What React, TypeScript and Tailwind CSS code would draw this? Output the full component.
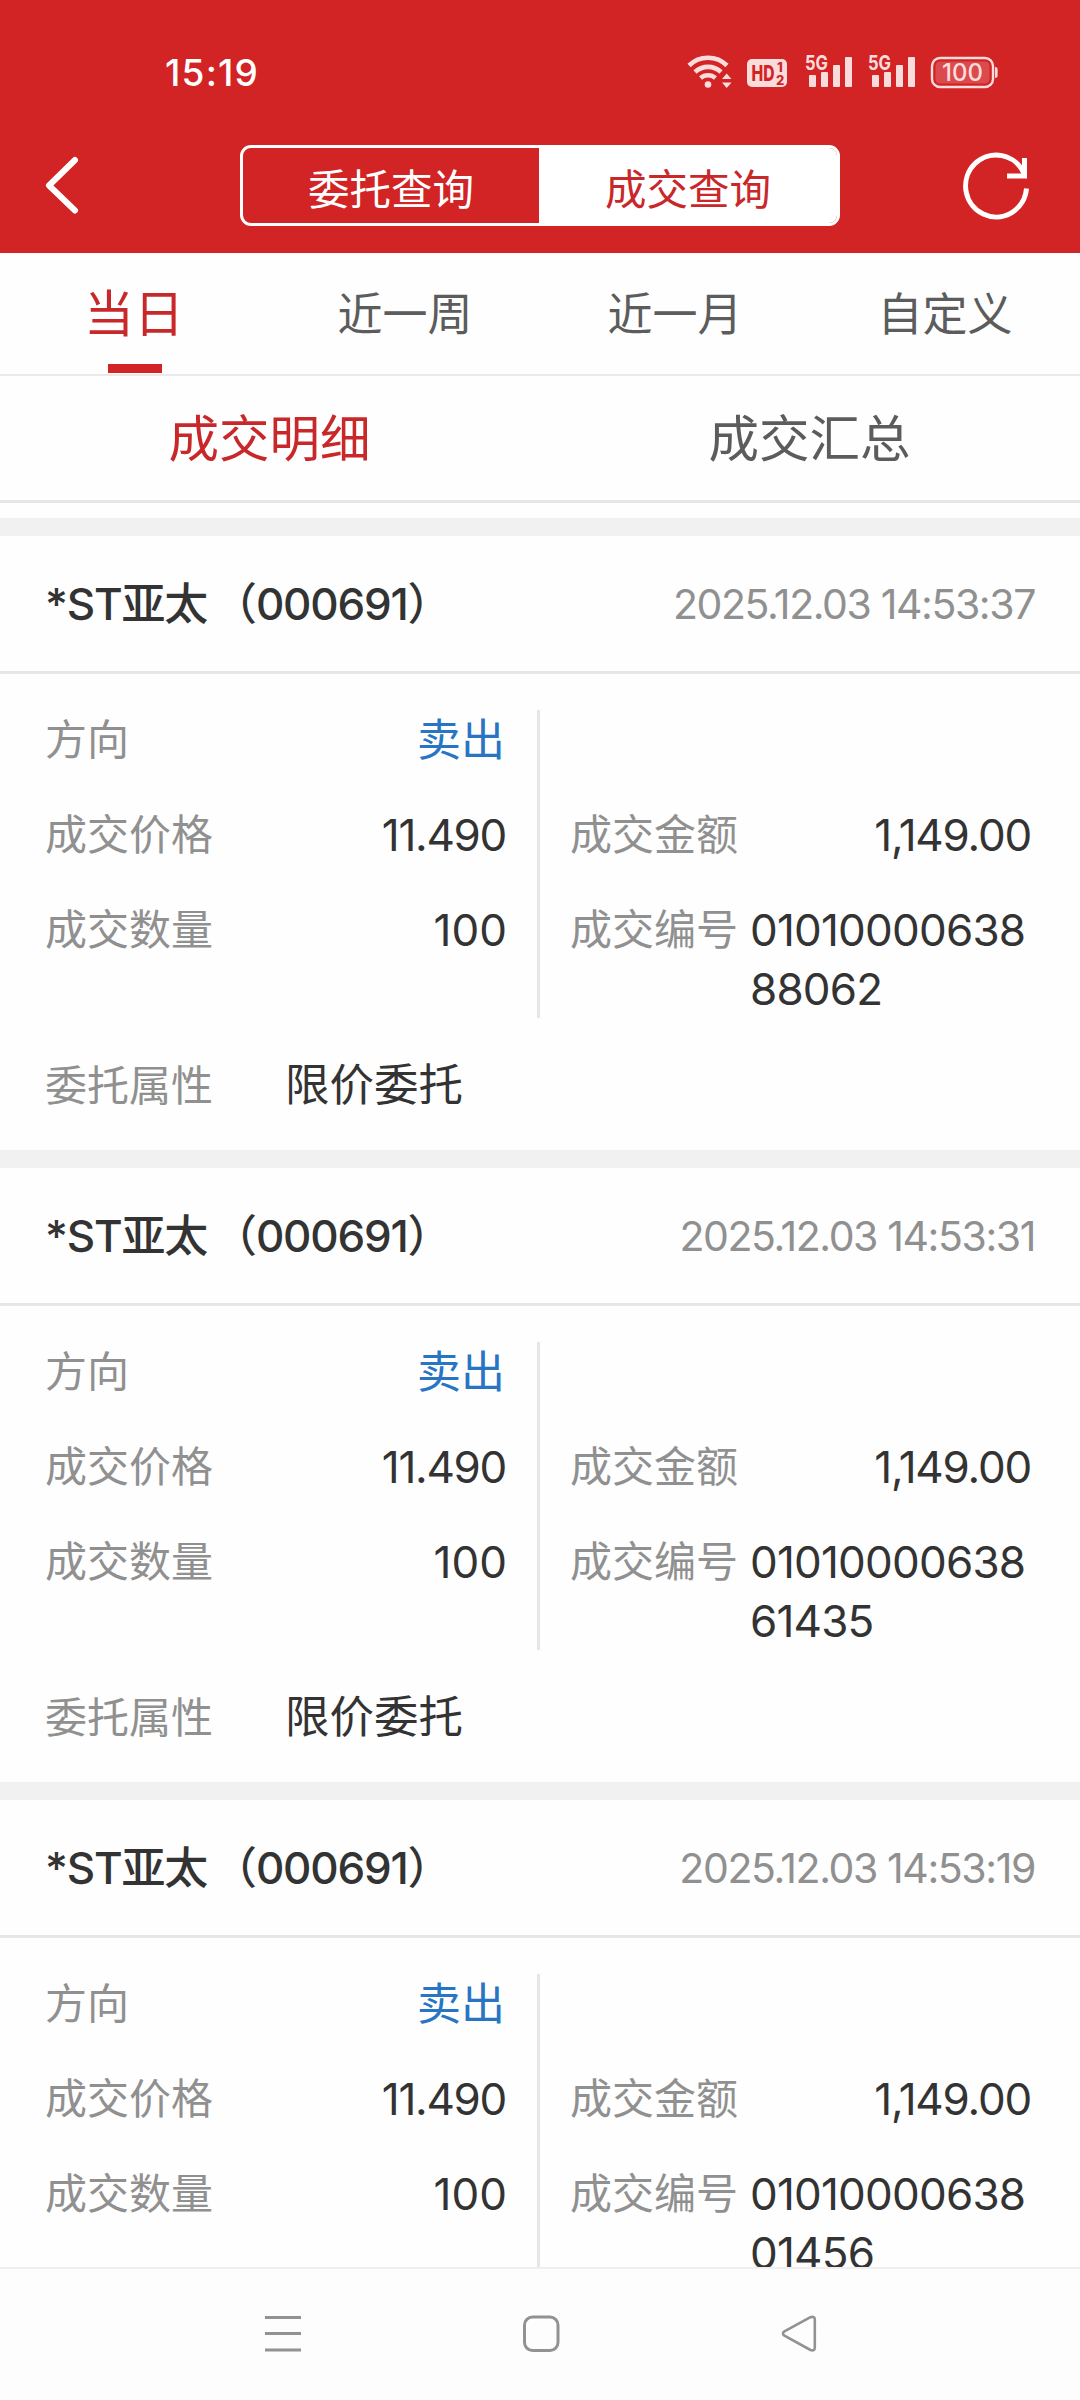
import { useState } from 'react';
import clsx from 'clsx';

interface Deal {
  name: string;
  code: string;
  time: string;
  side: string;
  price: string;
  volume: string;
  amount: string;
  dealNo: string;
  orderType: string;
}

const baseDeal = {
  name: '*ST亚太',
  code: '000691',
  side: '卖出',
  price: '11.490',
  volume: '100',
  amount: '1,149.00',
  orderType: '限价委托',
};

const deals: Deal[] = [
  { ...baseDeal, time: '2025.12.03 14:53:37', dealNo: '0101000063888062' },
  { ...baseDeal, time: '2025.12.03 14:53:31', dealNo: '0101000063861435' },
  { ...baseDeal, time: '2025.12.03 14:53:19', dealNo: '0101000063801456' },
];

const ranges = ['当日', '近一周', '近一月', '自定义'];
const views = ['成交明细', '成交汇总'];

function SignalIcon() {
  return (
    <svg className="overflow-visible" width="48" height="36" viewBox="0 0 48 36" fill="#fbdcdc">
      <text x="0" y="16" fontSize="20" fontWeight="700" textLength="23" lengthAdjust="spacingAndGlyphs">5G</text>
      <rect x="4" y="21" width="7" height="12" rx="1" />
      <rect x="16" y="18" width="7" height="15" rx="1" />
      <rect x="28" y="11" width="7" height="22" rx="1" />
      <rect x="40" y="3" width="7" height="30" rx="1" />
    </svg>
  );
}

function StatusBar() {
  return (
    <div className="flex h-[120px] items-start justify-between pl-[165px] pr-[82px]">
      <span className="mt-[51px] text-[37px] font-medium leading-[44px] tracking-[1.2px]">15:19</span>
      <div className="mt-[54px] flex items-start">
        <svg width="46" height="36" viewBox="0 0 46 36" fill="none" stroke="#fbdcdc" strokeWidth="4.6">
          <path d="M2 11.5a27 27 0 0 1 38 0" />
          <path d="M8 18a19 19 0 0 1 26 0" />
          <path d="M13.5 24a11.5 11.5 0 0 1 15 0" />
          <circle cx="21" cy="30.5" r="3.3" fill="#fbdcdc" stroke="none" />
          <path d="M35 25l4.700-5.500L44.500 25zM35 28.500l4.700 5.500 4.800-5.500z" fill="#fbdcdc" stroke="none" />
        </svg>
        <svg className="ml-[14px]" width="40" height="36" viewBox="0 0 40 36" fill="#d22325">
          <rect x="0" y="5" width="40" height="28" rx="5" fill="#fbdcdc" />
          <text x="4.500" y="27" fontSize="22" fontWeight="800" textLength="23" lengthAdjust="spacingAndGlyphs">HD</text>
          <text x="30" y="18" fontSize="13" fontWeight="800">1</text>
          <text x="29" y="30.500" fontSize="13" fontWeight="800">2</text>
        </svg>
        <div className="ml-[18px] flex gap-[15px]">
          <SignalIcon />
          <SignalIcon />
        </div>
        <svg className="ml-[14px]" width="68" height="36" viewBox="0 0 68 36">
          <rect x="2" y="4" width="61" height="29" rx="8" fill="none" stroke="#fbdcdc" strokeWidth="2.400" />
          <rect x="5.500" y="7.500" width="54" height="22" rx="4.500" fill="#db4a4c" />
          <path d="M65 13c2 0 2.600 1 2.600 2.500v6c0 1.500-.6 2.500-2.600 2.500z" fill="#fbdcdc" />
          <text x="32.500" y="27" fontSize="24" fontWeight="500" textAnchor="middle" textLength="41" fill="#fbdcdc">100</text>
        </svg>
      </div>
    </div>
  );
}

function TitleBar() {
  return (
    <div className="flex h-[133px] items-start justify-between pl-[44px] pr-[49px] pt-[25px]">
      <svg className="mt-[11px]" width="36" height="60" viewBox="0 0 36 60" fill="none" stroke="#fff" strokeWidth="6" strokeLinecap="round" strokeLinejoin="round">
        <path d="M31 4L5 29.500L31 54.500" />
      </svg>
      <div className="ml-[37px] flex h-[81px] w-[600px] overflow-hidden rounded-[11px] border-[3px] border-white text-[41.5px] leading-[84px]">
        <button className="w-[296px]">委托查询</button>
        <button className="flex-1 bg-white text-[#c9282b]">成交查询</button>
      </div>
      <svg className="mt-[7px]" width="68" height="68" viewBox="0 0 68 68" fill="none" stroke="#fff" strokeWidth="5">
        <path d="M63.500 36.500A30.500 31 0 1 1 61 21.500" />
        <path d="M61.500 6V24H44" />
      </svg>
    </div>
  );
}

function Row({ label, value, valueClass }: { label: string; value: string; valueClass?: string }) {
  return (
    <div className="flex h-[59px] justify-between">
      <span className="text-[42px] text-[#909090]">{label}</span>
      <span className={clsx('pt-px text-[44px]', valueClass)}>{value}</span>
    </div>
  );
}

function DealCard({ deal }: { deal: Deal }) {
  return (
    <article className="h-[632px] shrink-0 border-t-[18px] border-[#f1f1f1]">
      <header className="flex h-[138px] items-center justify-between border-b-[3px] border-[#e6e6e6] pl-[45px] pr-[45px]">
        <h3 className="flex gap-[6px] pt-px text-[44px] font-medium tracking-[-1.2px]">
          <span>{deal.name}</span>
          <span>（{deal.code}）</span>
        </h3>
        <time className="pt-[2px] text-[41px] tracking-[-1.4px] text-[#909090]">{deal.time}</time>
      </header>
      <div className="mt-[36px] flex h-[308px] leading-[59px]">
        <div className="flex w-[540px] shrink-0 flex-col gap-[36px] border-r-[3px] border-[#e6e6e6] pl-[45px] pr-[30px]">
          <Row label="方向" value={deal.side} valueClass="pr-[2px] text-[#2875c4]" />
          <Row label="成交价格" value={deal.price} valueClass="pr-px tracking-[-1.3px]" />
          <Row label="成交数量" value={deal.volume} />
        </div>
        <div className="flex flex-1 flex-col gap-[36px] pl-[30px] pr-[45px] pt-[95px]">
          <Row label="成交金额" value={deal.amount} valueClass="pr-[4px] tracking-[-1.2px]" />
          <div className="flex">
            <span className="w-[180px] shrink-0 text-[42px] text-[#909090]">成交编号</span>
            <span className="w-[285px] break-all pt-px text-[44px] tracking-[-0.8px]">{deal.dealNo}</span>
          </div>
        </div>
      </div>
      <div className="mt-[38px] flex pl-[45px] leading-[59px]">
        <span className="w-[240px] text-[42px] text-[#909090]">委托属性</span>
        <span className="text-[44.5px]">{deal.orderType}</span>
      </div>
    </article>
  );
}

function NavBar() {
  return (
    <nav className="flex h-[133px] shrink-0 justify-between border-t-2 border-[#efefef] bg-[#fdfdfd] pl-[264px] pr-[262px] pt-[45px]">
      <svg width="38" height="40" viewBox="0 0 38 40" stroke="#929292" strokeWidth="3">
        <path d="M1 3.500H37M1 19.500H37M1 36H37" />
      </svg>
      <svg width="38" height="40" viewBox="0 0 38 40" fill="none" stroke="#929292" strokeWidth="3">
        <rect x="2.500" y="3" width="33.500" height="33.500" rx="8" />
      </svg>
      <svg width="38" height="40" viewBox="0 0 38 40" fill="none" stroke="#929292" strokeWidth="2.600" strokeLinejoin="round">
        <path d="M30.500 3.200L4.400 17.400Q1.500 19.500 4.400 21.700L30.500 36Q34.800 37.500 34.800 33.500V5.500Q34.800 2 30.500 3.200Z" />
      </svg>
    </nav>
  );
}

export default function App() {
  const [range, setRange] = useState(0);
  const [view, setView] = useState(0);

  return (
    <div className="flex h-[2400px] w-[1080px] flex-col overflow-hidden bg-[#fefefe] font-['Inter','Noto_Sans_CJK_SC',sans-serif] font-[370] text-[#333]">
      <div className="h-[253px] shrink-0 bg-[#d22325] text-white">
        <StatusBar />
        <TitleBar />
      </div>

      <div className="flex h-[123px] shrink-0 border-b-2 border-[#eaeaea]">
        {ranges.map((label, i) => (
          <button
            key={label}
            onClick={() => setRange(i)}
            className={clsx(
              'flex flex-1 flex-col items-center',
              range === i ? 'text-[50px] text-[#c9282b]' : 'text-[45px] text-[#5c5c5c]',
            )}
          >
            <span className={clsx('h-[111px]', range === i ? 'pr-[2px] leading-[123px]' : 'leading-[124px]')}>{label}</span>
            {range === i && <span className="h-[9px] w-[54px] bg-[#d22325]" />}
          </button>
        ))}
      </div>

      <div className="flex h-[127px] shrink-0 border-b-[3px] border-[#e6e6e6] text-[50.5px]">
        {views.map((label, i) => (
          <button
            key={label}
            onClick={() => setView(i)}
            className={clsx('flex-1 pt-[2px] pr-px', view === i ? 'text-[#c9282b]' : 'text-[#5c5c5c]')}
          >
            {label}
          </button>
        ))}
      </div>

      <main className="flex min-h-0 flex-1 flex-col overflow-hidden pt-[15px]">
        {deals.map((deal) => (
          <DealCard key={deal.dealNo} deal={deal} />
        ))}
      </main>

      <NavBar />
    </div>
  );
}
